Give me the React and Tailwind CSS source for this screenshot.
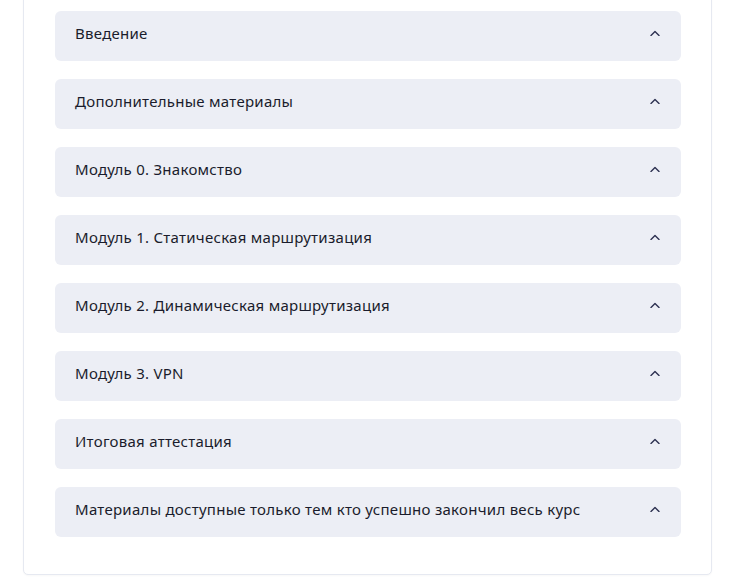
import React from "react";

const items = [
  "Введение",
  "Дополнительные материалы",
  "Модуль 0. Знакомство",
  "Модуль 1. Статическая маршрутизация",
  "Модуль 2. Динамическая маршрутизация",
  "Модуль 3. VPN",
  "Итоговая аттестация",
  "Материалы доступные только тем кто успешно закончил весь курс",
];

function Chevron() {
  return (
    <svg width="10" height="6" viewBox="0 0 10 6" fill="none">
      <path d="M1 5.5 L5 1.5 L9 5.5" stroke="#2c3150" strokeWidth="1.4" strokeLinecap="round" strokeLinejoin="round" />
    </svg>
  );
}

export default function App() {
  return (
    <div className="w-[735px] h-[585px] bg-white overflow-hidden" style={{ fontFamily: '"Noto Sans", sans-serif' }}>
      <div className="mt-[-40px] ml-[23px] w-[689px] border border-[#e6e9f1] rounded-[5px] bg-white pl-[31px] pr-[30px] pt-[50px] pb-[37px] shadow-[0_1px_2px_rgba(0,0,0,0.03)]">
        <div className="flex flex-col gap-[18px]">
          {items.map((t) => (
            <div key={t} className="h-[50px] rounded-[6px] bg-[#eceef5] flex items-center justify-between pl-[20px] pr-[21px] pb-[7px]">
              <span className="text-[15px] leading-[20px] text-[#1a1c2c] tracking-[0.27px]">{t}</span>
              <Chevron />
            </div>
          ))}
        </div>
      </div>
    </div>
  );
}
